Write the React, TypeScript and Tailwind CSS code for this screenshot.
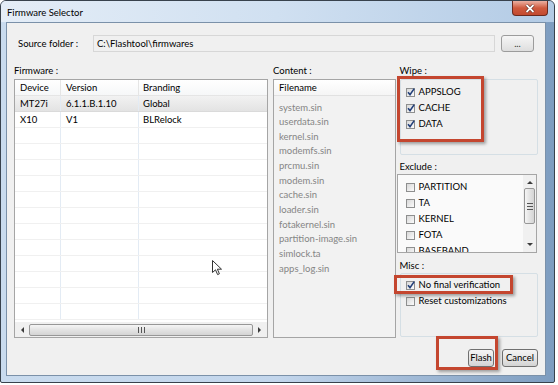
import React from 'react';

const firmwares = [
  { device: 'MT27i', version: '6.1.1.B.1.10', branding: 'Global', selected: true },
  { device: 'X10', version: 'V1', branding: 'BLRelock', selected: false },
];

const files = [
  'system.sin',
  'userdata.sin',
  'kernel.sin',
  'modemfs.sin',
  'prcmu.sin',
  'modem.sin',
  'cache.sin',
  'loader.sin',
  'fotakernel.sin',
  'partition-image.sin',
  'simlock.ta',
  'apps_log.sin',
];

function Check({ checked }: { checked?: boolean }) {
  return (
    <span className="relative w-[9px] h-[9px] shrink-0 border border-[#8e8f8f] bg-gradient-to-br from-[#d8d8d8] to-[#fbfbfb]">
      {checked && (
        <svg className="absolute -left-[1px] -top-[2px]" width="10" height="10" viewBox="0 0 10 10">
          <path d="M2 5.2 L4 7.6 L8.2 1.6" fill="none" stroke="#23407a" strokeWidth="1.6" />
        </svg>
      )}
    </span>
  );
}

function CheckRow({ label, checked }: { label: string; checked?: boolean }) {
  return (
    <div className="h-[16px] flex items-center gap-[4px]">
      <Check checked={checked} />
      <span className="text-black">{label}</span>
    </div>
  );
}

function Button({ label, w }: { label: string; w: string }) {
  return (
    <div
      className={`${w} h-[18px] flex items-center justify-center rounded-[3px] border border-[#707070] bg-gradient-to-b from-[#f4f4f4] via-[#e6e6e6] to-[#d3d3d3] text-black`}
    >
      {label}
    </div>
  );
}

function Arrow({ dir }: { dir: 'left' | 'right' | 'up' | 'down' }) {
  const d = {
    left: 'M5 1 L2 4 L5 7 Z',
    right: 'M3 1 L6 4 L3 7 Z',
    up: 'M1 5 L4 2 L7 5 Z',
    down: 'M1 3 L4 6 L7 3 Z',
  }[dir];
  return (
    <svg width="8" height="8" viewBox="0 0 8 8">
      <path d={d} fill="#3c3c3c" />
    </svg>
  );
}

function Redbox({ className }: { className: string }) {
  return (
    <div
      className={`absolute border-[3px] border-[#c4462f] shadow-[2px_2px_3px_rgba(0,0,0,0.35)] ${className}`}
    />
  );
}

export default function App() {
  return (
    <div className="relative w-[558px] h-[385px] bg-white overflow-hidden font-[family-name:Lato,sans-serif] text-[9.5px] leading-none">
      {/* window frame */}
      <div className="w-[555px] h-[383px] flex flex-col rounded-t-[6px] rounded-b-[2px] border border-[#38424d] bg-gradient-to-r from-[#c9dbee] via-[#c3d6ec] to-[#7e9dc0]">
        <div className="h-[21px] flex items-start justify-between bg-gradient-to-r from-[#e4edf7] via-[#d0e0f1] to-[#b3cbe5] rounded-t-[5px]">
          <span className="pl-[6px] pt-[7px] text-[9.5px] text-black">Firmware Selector</span>
          <div className="mr-[6px] w-[36px] h-[15px] flex items-center justify-center rounded-b-[4px] border border-t-0 border-[#6b2a1e] bg-gradient-to-b from-[#eab0a2] via-[#cf5a3e] to-[#c24a30]">
            <svg width="10" height="9" viewBox="0 0 10 9">
              <path d="M1.5 1 L8.5 8 M8.5 1 L1.5 8" stroke="#4a1a12" strokeWidth="3" />
              <path d="M1.5 1 L8.5 8 M8.5 1 L1.5 8" stroke="#fff" strokeWidth="1.8" />
            </svg>
          </div>
        </div>

        {/* client area */}
        <div className="ml-[5px] mr-[8px] mb-[6px] flex-1 flex flex-col border border-[#7b91a9] bg-[#f0f0f0] text-black">
          {/* source folder */}
          <div className="mt-[12px] h-[17px] flex items-center">
            <span className="pl-[11px] w-[86px]">Source folder :</span>
            <div className="w-[402px] h-[17px] flex items-center pl-[3px] border border-[#d7d7d7] bg-[#f0f0f0]">
              C:\Flashtool\firmwares
            </div>
            <div className="ml-[6px] w-[33px] h-[17px] flex items-center justify-center rounded-[3px] border border-[#9c9c9c] bg-gradient-to-b from-[#f6f6f6] to-[#dedede] text-[#333]">
              ...
            </div>
          </div>

          {/* main columns */}
          <div className="mt-[12px] flex px-[7px]">
            {/* firmware */}
            <div className="w-[255px] flex flex-col">
              <span className="h-[13px] flex items-center">Firmware :</span>
              <div className="mt-[2px] h-[259px] flex flex-col border border-[#a5a5a5] bg-white">
                <div className="h-[16px] flex items-center border-b border-[#e5e5e5] bg-gradient-to-b from-white to-[#f6f7f8] shrink-0">
                  <span className="w-[46px] pl-[5px] h-full flex items-center border-r border-[#e5e5e5]">Device</span>
                  <span className="w-[78px] pl-[5px] h-full flex items-center border-r border-[#e5e5e5]">Version</span>
                  <span className="pl-[4px]">Branding</span>
                </div>
                <div className="flex-1 overflow-hidden">
                  {Array.from({ length: 14 }).map((_, i) => {
                    const f = firmwares[i];
                    return (
                      <div
                        key={i}
                        className={`h-[16px] flex items-center border-b ${
                          f?.selected
                            ? 'border-[#dadada] bg-gradient-to-b from-[#f2f2f2] to-[#e3e3e3]'
                            : 'border-[#f0f0f0]'
                        }`}
                      >
                        <span className="w-[46px] pl-[5px] h-full flex items-center border-r border-[#e3ebf4]">{f?.device}</span>
                        <span className="w-[78px] pl-[5px] h-full flex items-center border-r border-[#e3ebf4]">{f?.version}</span>
                        <span className="pl-[4px]">{f?.branding}</span>
                      </div>
                    );
                  })}
                </div>
                <div className="h-[15px] shrink-0 flex items-center bg-[#f0f0f0] px-[4px] gap-[2px]">
                  <Arrow dir="left" />
                  <div className="flex-1 h-[12px] rounded-[2px] border border-[#979797] bg-gradient-to-b from-[#f5f5f5] via-[#e3e3e3] to-[#d4d4d4] flex items-center justify-center">
                    <svg width="7" height="6" viewBox="0 0 7 6">
                      <path d="M0.5 0 V6 M3.5 0 V6 M6.5 0 V6" stroke="#555" strokeWidth="1" />
                    </svg>
                  </div>
                  <Arrow dir="right" />
                </div>
              </div>
            </div>

            {/* content */}
            <div className="ml-[5px] w-[123px] flex flex-col">
              <span className="h-[13px] flex items-center">Content :</span>
              <div className="mt-[2px] h-[259px] flex flex-col border border-[#a5a5a5] bg-[#f2f2f2]">
                <div className="h-[16px] flex items-center pl-[5px] border-b border-[#e1e1e1] bg-gradient-to-b from-white to-[#f5f5f5]">
                  Filename
                </div>
                <div className="pt-[4px] pl-[5px] flex flex-col text-[#858585]">
                  {files.map((f) => (
                    <span key={f} className="h-[14.65px] flex items-center">
                      {f}
                    </span>
                  ))}
                </div>
              </div>
            </div>

            {/* options */}
            <div className="ml-[1px] w-[142px] flex flex-col">
              <span className="pl-[3px] h-[13px] flex items-center">Wipe :</span>
              <div className="mt-[2px] ml-[3px] h-[76px] rounded-[2px] border border-[#d5dfe5] pl-[5px] pt-[4px]">
                <CheckRow label="APPSLOG" checked />
                <CheckRow label="CACHE" checked />
                <CheckRow label="DATA" checked />
              </div>

              <span className="mt-[5px] pl-[3px] h-[13px] flex items-center">Exclude :</span>
              <div className="mt-[1px] mr-[1px] h-[79px] flex border border-[#a5a5a5] bg-[#fafafa] overflow-hidden">
                <div className="flex-1 pl-[8px] pt-[4px]">
                  <CheckRow label="PARTITION" />
                  <CheckRow label="TA" />
                  <CheckRow label="KERNEL" />
                  <CheckRow label="FOTA" />
                  <CheckRow label="BASEBAND" />
                </div>
                <div className="w-[13px] flex flex-col items-center bg-[#f0f0f0] py-[4px]">
                  <Arrow dir="up" />
                  <div className="mt-[1px] w-[11px] h-[36px] rounded-[2px] border border-[#979797] bg-gradient-to-r from-[#f5f5f5] via-[#e3e3e3] to-[#d4d4d4] flex items-center justify-center">
                    <svg width="6" height="7" viewBox="0 0 6 7">
                      <path d="M0 0.5 H6 M0 3.5 H6 M0 6.5 H6" stroke="#555" strokeWidth="1" />
                    </svg>
                  </div>
                  <div className="flex-1" />
                  <Arrow dir="down" />
                </div>
              </div>

              <span className="mt-[6px] pl-[3px] h-[13px] flex items-center">Misc :</span>
              <div className="mt-[1px] ml-[3px] h-[64px] rounded-[2px] border border-[#d5dfe5] pl-[5px] pt-[3px]">
                <CheckRow label="No final verification" checked />
                <CheckRow label="Reset customizations" />
              </div>
            </div>
          </div>

          {/* buttons */}
          <div className="mt-[11px] flex justify-end gap-[8px] pr-[7px]">
            <Button label="Flash" w="w-[26px]" />
            <Button label="Cancel" w="w-[36px]" />
          </div>
        </div>
      </div>

      {/* annotations */}
      <Redbox className="left-[397px] top-[76px] w-[87px] h-[66px]" />
      <Redbox className="left-[394px] top-[275px] w-[119px] h-[19px]" />
      <Redbox className="left-[436px] top-[336px] w-[62px] h-[34px]" />

      {/* mouse pointer */}
      <svg className="absolute left-[212px] top-[260px]" width="11" height="16" viewBox="0 0 11 16">
        <path d="M0.5 0.5 V12.5 L3.5 9.8 L5.6 14.6 L7.4 13.8 L5.4 9.2 L9.5 9.2 Z" fill="#fff" stroke="#333" strokeWidth="1" />
      </svg>
    </div>
  );
}
